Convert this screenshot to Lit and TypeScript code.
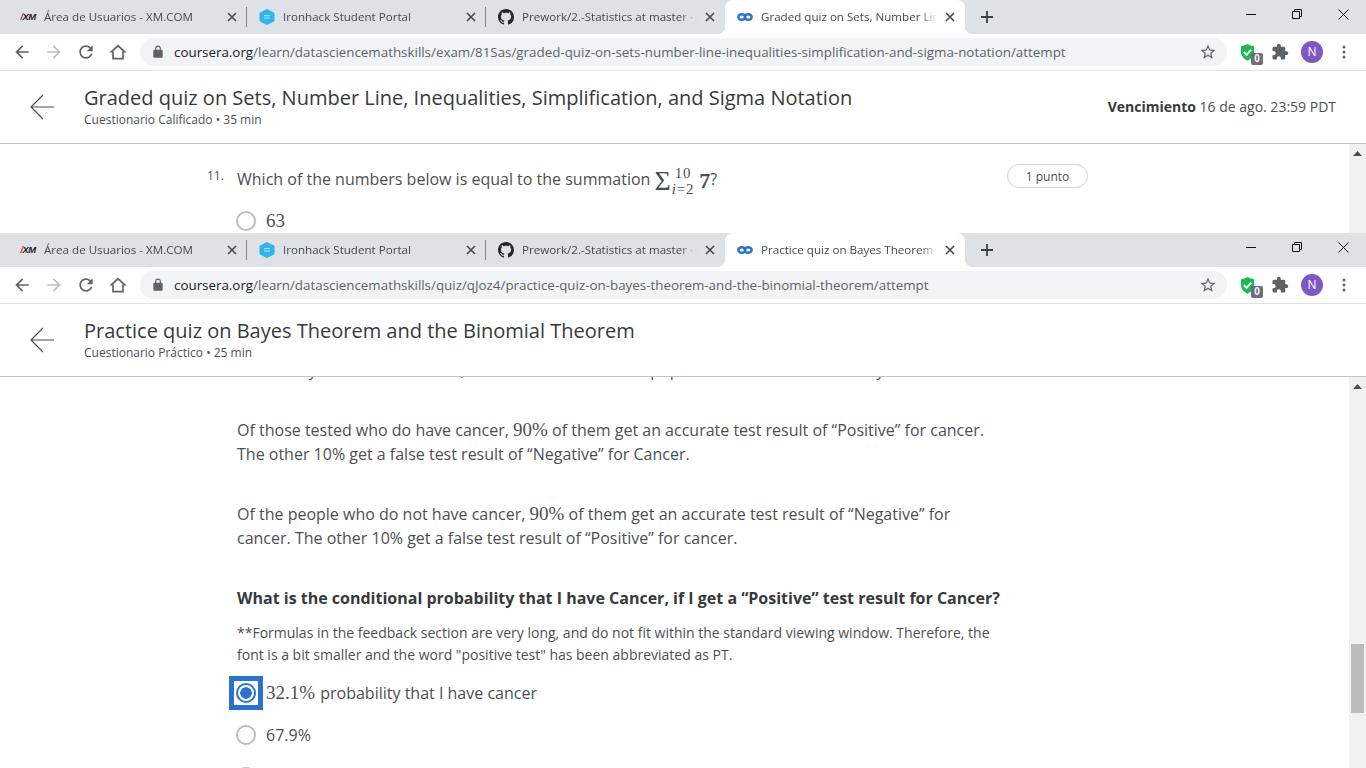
import { LitElement, html, css, nothing } from 'lit';
import { customElement, property } from 'lit/decorators.js';

type TabIcon = 'xm' | 'ironhack' | 'github' | 'coursera';

interface Tab {
  icon: TabIcon;
  title: string;
}

const icon = (d: string, size = 18, fill = '#5f6368') => html`
  <svg width=${size} height=${size} viewBox="0 0 24 24" fill=${fill}><path d=${d}></path></svg>
`;

const ICONS = {
  back: 'M20 11H7.83l5.59-5.59L12 4l-8 8 8 8 1.41-1.41L7.83 13H20v-2z',
  forward: 'M4 11h12.17l-5.59-5.59L12 4l8 8-8 8-1.41-1.41L16.17 13H4v-2z',
  reload:
    'M17.65 6.35C16.2 4.9 14.21 4 12 4c-4.42 0-7.99 3.58-7.99 8s3.57 8 7.99 8c3.73 0 6.84-2.55 7.73-6h-2.08c-.82 2.33-3.04 4-5.65 4-3.31 0-6-2.69-6-6s2.69-6 6-6c1.66 0 3.14.69 4.22 1.78L13 11h7V4l-2.35 2.35z',
  home: 'M12 3 1.5 12.6H5V21h14v-8.4h3.5L12 3zm0 2.9 6 5.4h-1V19H7v-7.7H6l6-5.4z',
  lock: 'M18 8h-1V6c0-2.76-2.24-5-5-5S7 3.24 7 6v2H6c-1.1 0-2 .9-2 2v10c0 1.1.9 2 2 2h12c1.1 0 2-.9 2-2V10c0-1.1-.9-2-2-2zM9 6c0-1.66 1.34-3 3-3s3 1.34 3 3v2H9V6z',
  star: 'M22 9.24l-7.19-.62L12 2 9.19 8.63 2 9.24l5.46 4.73L5.82 21 12 17.27 18.18 21l-1.63-7.03L22 9.24zM12 15.4l-3.76 2.27 1-4.28-3.32-2.88 4.38-.38L12 6.1l1.71 4.04 4.38.38-3.32 2.88 1 4.28L12 15.4z',
  puzzle:
    'M20.5 11H19V7c0-1.1-.9-2-2-2h-4V3.5C13 2.12 11.88 1 10.5 1S8 2.12 8 3.5V5H4c-1.1 0-1.99.9-1.99 2v3.8H3.5c1.49 0 2.7 1.21 2.7 2.7s-1.21 2.7-2.7 2.7H2V20c0 1.1.9 2 2 2h3.8v-1.5c0-1.49 1.21-2.7 2.7-2.7 1.49 0 2.7 1.21 2.7 2.7V22H17c1.1 0 2-.9 2-2v-4h1.5c1.38 0 2.5-1.12 2.5-2.5S21.88 11 20.5 11z',
  github:
    'M8 0C3.58 0 0 3.58 0 8c0 3.54 2.29 6.53 5.47 7.59.4.07.55-.17.55-.38 0-.19-.01-.82-.01-1.49-2.01.37-2.53-.49-2.69-.94-.09-.23-.48-.94-.82-1.13-.28-.15-.68-.52-.01-.53.63-.01 1.08.58 1.23.82.72 1.21 1.87.87 2.33.66.07-.52.28-.87.51-1.07-1.78-.2-3.64-.89-3.64-3.95 0-.87.31-1.59.82-2.15-.08-.2-.36-1.02.08-2.12 0 0 .67-.21 2.2.82.64-.18 1.32-.27 2-.27.68 0 1.36.09 2 .27 1.53-1.04 2.2-.82 2.2-.82.44 1.1.16 1.92.08 2.12.51.56.82 1.27.82 2.15 0 3.07-1.87 3.75-3.65 3.95.29.25.54.73.54 1.48 0 1.07-.01 1.93-.01 2.2 0 .21.15.46.55.38A8.013 8.013 0 0016 8c0-4.42-3.58-8-8-8z',
};

function favicon(name: TabIcon) {
  if (name === 'xm') {
    return html`<span class="xm"><i>/</i>XM</span>`;
  }
  if (name === 'ironhack') {
    return html`<svg width="16" height="16" viewBox="0 0 16 16">
      <path d="M8 .5 15 4v8l-7 3.500L1 12V4z" fill="#2fb5ee" stroke="#2fb5ee" stroke-linejoin="round"></path>
      <rect x="5" y="6" width="6" height="1.200" fill="#a5dff7"></rect>
      <rect x="5" y="8.500" width="6" height="1.200" fill="#a5dff7"></rect>
    </svg>`;
  }
  if (name === 'github') {
    return html`<svg width="16" height="16" viewBox="0 0 16 16" fill="#24292e"><path d=${ICONS.github}></path></svg>`;
  }
  return html`<svg width="16" height="16" viewBox="0 0 16 16" fill="none" stroke="#2a73cc" stroke-width="2.400">
    <ellipse cx="4.800" cy="8" rx="3.500" ry="2.800"></ellipse>
    <ellipse cx="11.200" cy="8" rx="3.500" ry="2.800"></ellipse>
  </svg>`;
}

@customElement('browser-window')
export class BrowserWindow extends LitElement {
  static styles = css`
    :host {
      display: flex;
      flex-direction: column;
      overflow: hidden;
      background: #fff;
      font-family: 'Open Sans', sans-serif;
    }

    .strip {
      display: flex;
      flex: none;
      height: 34px;
      padding-left: 8px;
      background: #dee1e6;
    }
    .tab {
      position: relative;
      display: flex;
      align-items: center;
      box-sizing: border-box;
      width: 239px;
      padding: 0 7px 1px 12px;
      font-size: 11.6px;
      color: #45494d;
    }
    .tab.sep::after {
      content: '';
      position: absolute;
      right: 0;
      top: 7px;
      height: 20px;
      width: 1px;
      background: #80868b;
    }
    .tab.active {
      background: #fff;
      border-radius: 8px 8px 0 0;
      width: 240px;
    }
    .tab.active::before,
    .tab.active::after {
      content: '';
      position: absolute;
      bottom: 0;
      width: 8px;
      height: 8px;
    }
    .tab.active::before {
      left: -8px;
      background: radial-gradient(circle at 0 0, transparent 8px, #fff 8.500px);
    }
    .tab.active::after {
      right: -8px;
      background: radial-gradient(circle at 100% 0, transparent 8px, #fff 8.500px);
    }
    .fav {
      display: flex;
      flex: none;
      align-items: center;
      justify-content: center;
      width: 16px;
      height: 16px;
      margin-right: 8px;
    }
    .xm {
      font: italic 700 9.500px 'Liberation Sans', sans-serif;
      letter-spacing: -0.6px;
      color: #222;
    }
    .xm i {
      color: #d5202a;
    }
    .title {
      flex: 1;
      overflow: hidden;
      white-space: nowrap;
      -webkit-mask-image: linear-gradient(to right, #000 calc(100% - 18px), transparent);
      mask-image: linear-gradient(to right, #000 calc(100% - 18px), transparent);
    }
    .close {
      display: flex;
      flex: none;
      justify-content: center;
      width: 16px;
      margin-left: 4px;
    }
    .new-tab {
      display: flex;
      align-items: center;
      justify-content: center;
      width: 28px;
      margin-left: 8px;
    }
    .spacer {
      flex: 1;
    }
    .caption {
      display: flex;
      flex: none;
      width: 46px;
      height: 28px;
      align-items: center;
      justify-content: center;
    }

    .toolbar {
      display: flex;
      flex: none;
      align-items: center;
      box-sizing: border-box;
      height: 37px;
      padding: 0 6px;
      border-bottom: 1px solid #e1e1e1;
    }
    .tool {
      display: flex;
      flex: none;
      align-items: center;
      justify-content: center;
      width: 32px;
      height: 32px;
    }
    .omnibox {
      display: flex;
      flex: 1;
      align-items: center;
      height: 28px;
      margin: 0 5px 0 6px;
      padding: 0 10px 0 11px;
      border-radius: 14px;
      background: #f1f3f4;
      min-width: 0;
    }
    .url {
      flex: 1;
      margin-left: 9px;
      font-size: 13.360px;
      color: #5f6368;
      white-space: nowrap;
      overflow: hidden;
    }
    .url b {
      font-weight: 400;
      color: #202124;
    }
    .shield {
      position: relative;
      padding-right: 1px;
      box-sizing: border-box;
    }
    .count {
      position: absolute;
      right: 1px;
      bottom: 3px;
      width: 12px;
      height: 12px;
      border-radius: 2px;
      background: #6f6f7b;
      color: #fff;
      font: 700 10px/12px 'Liberation Sans', sans-serif;
      text-align: center;
    }
    .avatar {
      width: 22px;
      height: 22px;
      border-radius: 50%;
      background: #7e57c2;
      color: #fff;
      font: 12px/22px 'Open Sans', sans-serif;
      text-align: center;
    }

    .header {
      display: flex;
      flex: none;
      align-items: center;
      box-sizing: border-box;
      height: 73px;
      padding: 0 30px;
      border-bottom: 1px solid #c4c4c4;
    }
    .arrow {
      flex: none;
      margin-right: 30px;
    }
    .heading {
      flex: 1;
      padding-bottom: 3px;
    }
    .heading h1 {
      margin: 0;
      font-size: 20px;
      font-weight: 400;
      line-height: 28px;
      color: #373a3c;
    }
    .heading p {
      margin: 0;
      font-size: 12px;
      line-height: 15px;
      color: #4c4f52;
    }
    .due {
      padding-bottom: 2px;
      font-size: 14px;
      color: #4c4f52;
    }
    .due b {
      font-weight: 700;
      color: #373a3c;
    }

    .body {
      display: flex;
      flex: 1;
      min-height: 0;
    }
    .page {
      flex: 1;
      min-width: 0;
      overflow: hidden;
    }
    .scrollbar {
      flex: none;
      width: 17px;
      background: #f1f1f1;
    }
    .scroll-up {
      display: flex;
      justify-content: center;
      box-sizing: border-box;
      height: 17px;
      padding-top: 7px;
    }
    .thumb {
      height: 69px;
      margin: 0 2px;
      background: #bcbcbc;
    }
  `;

  @property({ attribute: false }) tabs: Tab[] = [];
  @property() url = '';
  @property() heading = '';
  @property() subtitle = '';
  @property() due = '';
  @property({ type: Number }) thumbTop = -1;

  private renderTab(tab: Tab, i: number) {
    const active = i === this.tabs.length - 1;
    const sep = !active && i < this.tabs.length - 2;
    return html`
      <div class="tab ${active ? 'active' : ''} ${sep ? 'sep' : ''}">
        <span class="fav">${favicon(tab.icon)}</span>
        <span class="title">${tab.title}</span>
        <span class="close">
          <svg width="10" height="10" viewBox="0 0 10 10" stroke="#45494d" stroke-width="1.600">
            <path d="M1 1l8 8M9 1l-8 8"></path>
          </svg>
        </span>
      </div>
    `;
  }

  private renderCaption() {
    return html`
      <span class="caption">
        <svg width="10" height="10" viewBox="0 0 10 10" stroke="#111"><path d="M0 5.500h10"></path></svg>
      </span>
      <span class="caption">
        <svg width="10" height="10" viewBox="0 0 10 10" fill="none" stroke="#111">
          <path d="M.5 2.500h7v7h-7zM2.500 2.500v-2h7v7h-2"></path>
        </svg>
      </span>
      <span class="caption">
        <svg width="11" height="11" viewBox="0 0 11 11" stroke="#111"><path d="M.5.5l10 10M10.500.5l-10 10"></path></svg>
      </span>
    `;
  }

  render() {
    const host = this.url.slice(0, this.url.indexOf('/'));
    const rest = this.url.slice(host.length);
    return html`
      <div class="strip">
        ${this.tabs.map((t, i) => this.renderTab(t, i))}
        <span class="new-tab">
          <svg width="12" height="12" viewBox="0 0 12 12" stroke="#3c4043" stroke-width="1.800">
            <path d="M6 0v12M0 6h12"></path>
          </svg>
        </span>
        <span class="spacer"></span>
        ${this.renderCaption()}
      </div>
      <div class="toolbar">
        <span class="tool">${icon(ICONS.back, 20)}</span>
        <span class="tool">${icon(ICONS.forward, 20, '#bdc1c6')}</span>
        <span class="tool">${icon(ICONS.reload, 20)}</span>
        <span class="tool">${icon(ICONS.home, 20)}</span>
        <div class="omnibox">
          ${icon(ICONS.lock, 14)}
          <span class="url"><b>${host}</b>${rest}</span>
          ${icon(ICONS.star, 18)}
        </div>
        <span class="tool shield">
          <svg width="15" height="17" viewBox="0 0 16 18">
            <path d="M8 0c2 1.200 4.500 2 7 2.200v6.300c0 4.200-3 7.300-7 9.200-4-1.900-7-5-7-9.200V2.200C3.500 2 6 1.200 8 0z" fill="#1db954"></path>
            <path d="M4 8.500l3 3 5-5.500" fill="none" stroke="#fff" stroke-width="2"></path>
          </svg>
          <span class="count">0</span>
        </span>
        <span class="tool">${icon(ICONS.puzzle, 18)}</span>
        <span class="tool"><span class="avatar">N</span></span>
        <span class="tool">
          <svg width="4" height="14" viewBox="0 0 4 14" fill="#5f6368">
            <circle cx="2" cy="2" r="1.500"></circle>
            <circle cx="2" cy="7" r="1.500"></circle>
            <circle cx="2" cy="12" r="1.500"></circle>
          </svg>
        </span>
      </div>
      <div class="header">
        <svg class="arrow" width="24" height="26" viewBox="0 0 24 26" fill="none" stroke="#4c4f52" stroke-width="1.200">
          <path d="M24 13H1M13 1 1 13l12 12"></path>
        </svg>
        <div class="heading">
          <h1>${this.heading}</h1>
          <p>${this.subtitle}</p>
        </div>
        ${this.due ? html`<div class="due"><b>Vencimiento</b> ${this.due}</div>` : nothing}
      </div>
      <div class="body">
        <div class="page"><slot></slot></div>
        <div class="scrollbar">
          <div class="scroll-up">
            <svg width="9" height="5" viewBox="0 0 9 5" fill="#505050"><path d="M4.500 0 9 5H0z"></path></svg>
          </div>
          ${this.thumbTop >= 0
            ? html`<div class="thumb" style="margin-top: ${this.thumbTop}px"></div>`
            : nothing}
        </div>
      </div>
    `;
  }
}

const BASE_TABS: Tab[] = [
  { icon: 'xm', title: 'Área de Usuarios - XM.COM' },
  { icon: 'ironhack', title: 'Ironhack Student Portal' },
  { icon: 'github', title: 'Prework/2.-Statistics at master · Nhamed/Data' },
];

@customElement('app-root')
export class AppRoot extends LitElement {
  static styles = css`
    :host {
      display: flex;
      flex-direction: column;
      width: 1366px;
      height: 768px;
      overflow: hidden;
      font-family: 'Open Sans', sans-serif;
      font-size: 16px;
      color: #4c4f52;
    }
    .top {
      flex: none;
      height: 233px;
    }
    .bottom {
      flex: 1;
      min-height: 0;
    }

    .math {
      font-family: 'Liberation Serif', serif;
      font-size: 19px;
    }

    .exam {
      display: grid;
      grid-template-columns: 29px 771px 81px;
      padding: 20px 0 0 207px;
    }
    .number {
      font-size: 12px;
      line-height: 24px;
    }
    .prompt {
      height: 30px;
      padding-left: 1px;
      line-height: 30px;
    }
    .sum {
      display: inline-flex;
      align-items: center;
      vertical-align: middle;
      height: 30px;
      font-family: 'Liberation Serif', serif;
      font-size: 28px;
    }
    .limits {
      display: inline-flex;
      flex-direction: column;
      margin: 0 5px 0 1px;
      font-size: 15px;
      line-height: 16px;
      letter-spacing: 0.8px;
      text-align: center;
    }
    .seven {
      font-size: 22px;
      font-weight: 700;
    }
    .points {
      box-sizing: border-box;
      height: 24px;
      border: 1px solid #d4d4d4;
      border-radius: 12px;
      font-size: 12px;
      line-height: 24px;
      text-align: center;
    }

    .option {
      display: flex;
      align-items: center;
      gap: 10px;
      height: 24px;
    }
    .exam .option {
      grid-column: 2;
      margin-top: 15px;
    }
    .radio {
      flex: none;
      box-sizing: border-box;
      width: 20px;
      height: 20px;
      border: 2px solid #bdbdbd;
      border-radius: 50%;
    }
    .radio.on {
      border-color: #2a73cc;
      background: radial-gradient(circle, #2a73cc 5.500px, #fff 6px);
    }
    .focus {
      display: flex;
      flex: none;
      align-items: center;
      justify-content: center;
      box-sizing: border-box;
      width: 34px;
      height: 34px;
      margin: 0 -7px;
      border: 5px solid #2a73cc;
    }
    .focus + span .math {
      margin-right: 1px;
    }

    .practice {
      width: 764px;
      margin-top: -19px;
      padding-left: 236px;
    }
    .practice p {
      margin: 0 0 36px 1px;
      line-height: 24px;
    }
    .practice .question {
      margin: 0 0 12px 1px;
      font-weight: 700;
      color: #373a3c;
    }
    .practice .note {
      margin: 0 0 10px 1px;
      font-size: 14px;
      line-height: 22px;
    }
    .practice .option + .option {
      margin-top: 18px;
    }
    .practice .option.first {
      margin-top: 15px;
    }
  `;

  render() {
    return html`
      <browser-window
        class="top"
        .tabs=${[...BASE_TABS, { icon: 'coursera', title: 'Graded quiz on Sets, Number Line, Inequalities' } as Tab]}
        url="coursera.org/learn/datasciencemathskills/exam/81Sas/graded-quiz-on-sets-number-line-inequalities-simplification-and-sigma-notation/attempt"
        heading="Graded quiz on Sets, Number Line, Inequalities, Simplification, and Sigma Notation"
        subtitle="Cuestionario Calificado • 35 min"
        due="16 de ago. 23:59 PDT"
      >
        <div class="exam">
          <div class="number">11.</div>
          <div class="prompt">
            Which of the numbers below is equal to the summation
            <span class="sum">
              Σ<span class="limits"><span>10</span><span><i>i</i>=2</span></span><span class="seven">7</span>
            </span>?
          </div>
          <div class="points">1 punto</div>
          <div class="option">
            <span class="radio"></span>
            <span class="math">63</span>
          </div>
        </div>
      </browser-window>
      <browser-window
        class="bottom"
        .tabs=${[...BASE_TABS, { icon: 'coursera', title: 'Practice quiz on Bayes Theorem and the Binomial' } as Tab]}
        url="coursera.org/learn/datasciencemathskills/quiz/qJoz4/practice-quiz-on-bayes-theorem-and-the-binomial-theorem/attempt"
        heading="Practice quiz on Bayes Theorem and the Binomial Theorem"
        subtitle="Cuestionario Práctico • 25 min"
        thumbTop="250"
      >
        <div class="practice">
          <p>Let me say I do test for cancer, and that 1% of all of the population have cancer already</p>
          <p>
            Of those tested who do have cancer, <span class="math">90%</span> of them get an accurate test result of “Positive” for cancer.
            The other 10% get a false test result of “Negative” for Cancer.
          </p>
          <p>
            Of the people who do not have cancer, <span class="math">90%</span> of them get an accurate test result of “Negative” for
            cancer. The other 10% get a false test result of “Positive” for cancer.
          </p>
          <p class="question">What is the conditional probability that I have Cancer, if I get a “Positive” test result for Cancer?</p>
          <p class="note">
            **Formulas in the feedback section are very long, and do not fit within the standard viewing window. Therefore, the
            font is a bit smaller and the word "positive test" has been abbreviated as PT.
          </p>
          <div class="option first">
            <span class="focus"><span class="radio on"></span></span>
            <span><span class="math">32.1%</span> probability that I have cancer</span>
          </div>
          <div class="option">
            <span class="radio"></span>
            <span>67.9%</span>
          </div>
          <div class="option">
            <span class="radio"></span>
          </div>
        </div>
      </browser-window>
    `;
  }
}
